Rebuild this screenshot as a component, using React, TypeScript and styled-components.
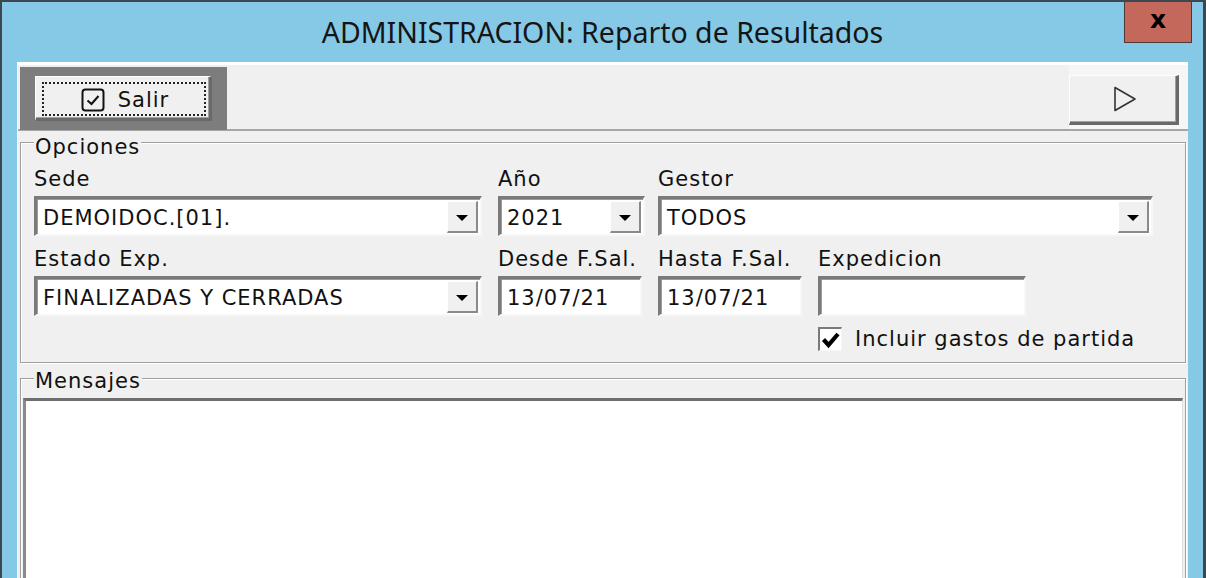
import React from "react";
import styled, { createGlobalStyle } from "styled-components";

const GlobalStyle = createGlobalStyle`
  html, body { margin: 0; padding: 0; background: #85c9e7; }
  body { font-family: "DejaVu Sans", Verdana, sans-serif; }
  * { box-sizing: border-box; }
`;

const Window = styled.div`
  width: 1206px;
  height: 578px;
  overflow: hidden;
  background: #85c9e7;
  border-top: 2px solid #3d4750;
  border-left: 2px solid #3d4750;
  border-right: 3px solid #3d4750;
  display: flex;
  flex-direction: column;
`;

const TitleBar = styled.div`
  flex: none;
  height: 60px;
  display: grid;
  grid-template-columns: 1fr auto 1fr;
  align-items: start;
`;

const Title = styled.h1`
  grid-column: 2;
  margin: 0;
  font-family: "Noto Sans", "Open Sans", sans-serif;
  font-weight: 400;
  font-size: 28.5px;
  line-height: 60px;
  color: #151515;
  white-space: nowrap;
`;

const CloseButton = styled.div`
  grid-column: 3;
  justify-self: end;
  margin-top: -2px;
  margin-right: 11px;
  width: 68px;
  height: 43px;
  background: #c4685c;
  border: 1px solid #4d3a38;
  border-top: none;
  display: flex;
  align-items: center;
  justify-content: center;
  font-family: "DejaVu Sans", sans-serif;
  font-weight: 700;
  font-size: 25px;
  line-height: 1;
  padding-bottom: 4px;
  color: #000;
`;

const Client = styled.div`
  flex: 1;
  min-height: 0;
  margin: 0 15px;
  background: #f0f0f0;
  border-left: 1px solid #fff;
  border-top: 1px solid #fff;
  display: flex;
  flex-direction: column;
  color: #111;
  font-size: 21px;
  letter-spacing: 1px;
`;

const Toolbar = styled.div`
  flex: none;
  height: 68px;
  padding: 2px 0 0 2px;
  border-top: 2px solid #fff;
  border-bottom: 2px solid #a6a6a6;
  display: flex;
  justify-content: space-between;
  align-items: flex-start;
`;

const SalirFrame = styled.div`
  width: 207px;
  height: 63px;
  background: #7d7d7d;
  display: flex;
  align-items: center;
  justify-content: center;
  padding-bottom: 1px;
`;

const PushButton = styled.div<{ $w: number; $h: number }>`
  width: ${(p) => p.$w}px;
  height: ${(p) => p.$h}px;
  background: #f0f0f0;
  border-style: solid;
  border-width: 1px 3px 3px 1px;
  border-color: #fff #696969 #696969 #fff;
  box-shadow: inset -1px -1px 0 #a0a0a0;
  display: flex;
  align-items: stretch;
  justify-content: center;
`;

const FocusRing = styled.div`
  flex: 1;
  margin: 5px 3px 2px 6px;
  border: 2px dotted #222;
  display: flex;
  align-items: center;
  justify-content: center;
  gap: 13px;
  padding: 3px 0 0 2px;
`;

const PlayPanel = styled.div`
  align-self: stretch;
  margin-top: -2px;
  width: 119px;
  background: #f6f6f6;
  display: flex;
  justify-content: flex-start;
  padding: 10px 0 0 0;
`;

const PlayFace = styled.div`
  flex: 1;
  display: flex;
  align-items: center;
  justify-content: center;
  padding-left: 4px;
`;

const GroupBox = styled.div<{ $grow?: boolean }>`
  position: relative;
  margin: ${(p) => (p.$grow ? "15px 2px -40px 2px" : "11px 2px 0 2px")};
  border: 1px solid #a0a0a0;
  box-shadow: inset 1px 1px 0 #fff, 1px 1px 0 #fff;
  ${(p) => (p.$grow ? "flex: 1; display: flex; flex-direction: column; padding: 19px 2px 0 2px;" : "")}
`;

const Caption = styled.span<{ $top: number }>`
  position: absolute;
  top: ${(p) => p.$top}px;
  left: 13px;
  padding: 0 1px;
  background: #f0f0f0;
  line-height: 24px;
`;

const Form = styled.div`
  display: grid;
  grid-template-columns: 464px 160px 160px 1fr;
  row-gap: 11px;
  padding: 24px 0 11px 13px;
`;

const Field = styled.div<{ $span?: string }>`
  display: flex;
  flex-direction: column;
  gap: 5px;
  ${(p) => (p.$span ? `grid-column: ${p.$span};` : "")}
`;

const Label = styled.span`
  line-height: 24px;
  white-space: nowrap;
`;

const Sunken = styled.div<{ $w: number }>`
  width: ${(p) => p.$w}px;
  height: 40px;
  background: #fff;
  border-style: solid;
  border-width: 3px 2px 2px 3px;
  border-color: #7a7a7a #f7f7f7 #f7f7f7 #7a7a7a;
  box-shadow: inset 1px 1px 0 #9a9a9a;
  display: flex;
  align-items: stretch;
`;

const ValueText = styled.span`
  flex: 1;
  padding: 2px 0 0 6px;
  display: flex;
  align-items: center;
  white-space: nowrap;
  overflow: hidden;
`;

const DropButton = styled.div`
  flex: none;
  width: 31px;
  margin: 2px 2px 1px 0;
  background: #f0f0f0;
  border-style: solid;
  border-width: 1px 2px 2px 1px;
  border-color: #fff #8a8a8a #8a8a8a #fff;
  display: flex;
  align-items: center;
  justify-content: center;
`;

const Arrow = styled.span`
  width: 0;
  height: 0;
  border-left: 6px solid transparent;
  border-right: 6px solid transparent;
  border-top: 6px solid #000;
  margin-top: 2px;
`;

const CheckRow = styled.label`
  grid-column: 4;
  display: flex;
  align-items: center;
  gap: 13px;
  line-height: 24px;
`;

const CheckBox = styled.span`
  width: 24px;
  height: 24px;
  background: #fff;
  border-style: solid;
  border-width: 2px 1px 1px 2px;
  border-color: #7a7a7a #f7f7f7 #f7f7f7 #7a7a7a;
  display: flex;
  align-items: center;
  justify-content: center;
`;

const MessageArea = styled.div`
  flex: 1;
  background: #fff;
  border-style: solid;
  border-width: 3px 1px 0 3px;
  border-color: #6e6e6e #dcdcdc #dcdcdc #8a8a8a;
`;

type ComboProps = { value: string; width: number };
const Combo = ({ value, width }: ComboProps) => (
  <Sunken $w={width}>
    <ValueText>{value}</ValueText>
    <DropButton>
      <Arrow />
    </DropButton>
  </Sunken>
);

const TextBox = ({ value, width }: ComboProps) => (
  <Sunken $w={width}>
    <ValueText>{value}</ValueText>
  </Sunken>
);

const SalirIcon = () => (
  <svg width="24" height="24" viewBox="0 0 24 24">
    <rect x="1.5" y="1.5" width="21" height="21" rx="3" fill="none" stroke="#111" strokeWidth="2" />
    <path d="M6.5 12.5 L10.5 16 L17.5 8" fill="none" stroke="#111" strokeWidth="2" />
  </svg>
);

const PlayIcon = () => (
  <svg width="26" height="28" viewBox="0 0 26 28">
    <path d="M3 2.5 L23 14 L3 25.5 Z" fill="none" stroke="#333" strokeWidth="1.6" strokeLinejoin="round" />
  </svg>
);

const CheckMark = () => (
  <svg width="20" height="20" viewBox="0 0 20 20">
    <path d="M2.5 9.5 L7.5 15 L17 4" fill="none" stroke="#000" strokeWidth="4.2" />
  </svg>
);

export default function App() {
  return (
    <>
      <GlobalStyle />
      <Window>
        <TitleBar>
          <Title>ADMINISTRACION: Reparto de Resultados</Title>
          <CloseButton>x</CloseButton>
        </TitleBar>
        <Client>
          <Toolbar>
            <SalirFrame>
              <PushButton $w={177} $h={45}>
                <FocusRing>
                  <SalirIcon />
                  <span>Salir</span>
                </FocusRing>
              </PushButton>
            </SalirFrame>
            <PlayPanel>
              <PushButton $w={110} $h={50}>
                <PlayFace>
                  <PlayIcon />
                </PlayFace>
              </PushButton>
            </PlayPanel>
          </Toolbar>

          <GroupBox>
            <Caption $top={-8}>Opciones</Caption>
            <Form>
              <Field>
                <Label>Sede</Label>
                <Combo value="DEMOIDOC.[01]." width={448} />
              </Field>
              <Field>
                <Label>Año</Label>
                <Combo value="2021" width={147} />
              </Field>
              <Field $span="3 / 5">
                <Label>Gestor</Label>
                <Combo value="TODOS" width={495} />
              </Field>

              <Field>
                <Label>Estado Exp.</Label>
                <Combo value="FINALIZADAS Y CERRADAS" width={448} />
              </Field>
              <Field>
                <Label>Desde F.Sal.</Label>
                <TextBox value="13/07/21" width={144} />
              </Field>
              <Field>
                <Label>Hasta F.Sal.</Label>
                <TextBox value="13/07/21" width={144} />
              </Field>
              <Field>
                <Label>Expedicion</Label>
                <TextBox value="" width={208} />
              </Field>

              <CheckRow>
                <CheckBox>
                  <CheckMark />
                </CheckBox>
                <span>Incluir gastos de partida</span>
              </CheckRow>
            </Form>
          </GroupBox>

          <GroupBox $grow>
            <Caption $top={-10}>Mensajes</Caption>
            <MessageArea />
          </GroupBox>
        </Client>
      </Window>
    </>
  );
}
